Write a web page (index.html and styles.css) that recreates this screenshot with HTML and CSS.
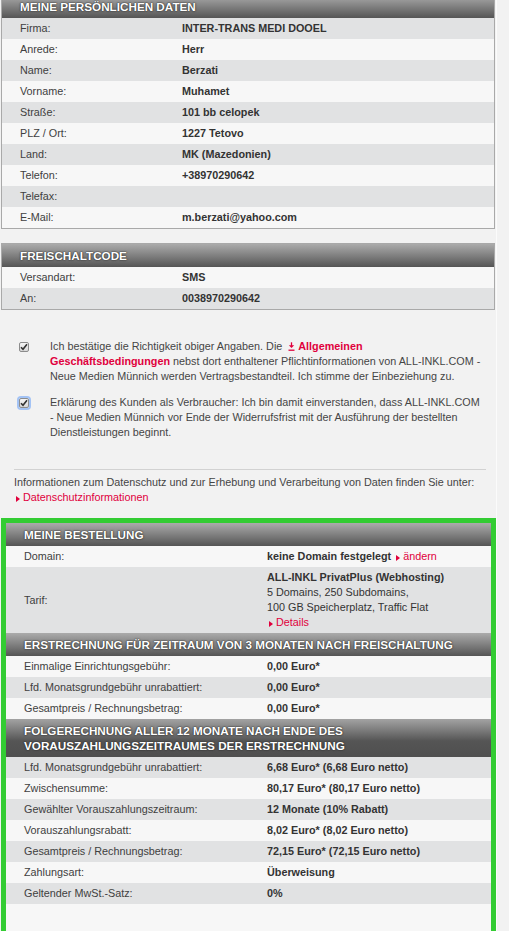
FILE: index.html
```html
<!DOCTYPE html>
<html lang="de">
<head>
<meta charset="utf-8">
<title>Bestellung</title>
<link rel="stylesheet" href="styles.css">
</head>
<body>
<div class="page">
  <section class="box box-first">
    <h2 class="head">Meine persönlichen Daten</h2>
    <div class="row dark"><span class="lbl">Firma:</span><span class="val">INTER-TRANS MEDI DOOEL</span></div>
    <div class="row"><span class="lbl">Anrede:</span><span class="val">Herr</span></div>
    <div class="row dark"><span class="lbl">Name:</span><span class="val">Berzati</span></div>
    <div class="row"><span class="lbl">Vorname:</span><span class="val">Muhamet</span></div>
    <div class="row dark"><span class="lbl">Straße:</span><span class="val">101 bb celopek</span></div>
    <div class="row"><span class="lbl">PLZ / Ort:</span><span class="val">1227 Tetovo</span></div>
    <div class="row dark"><span class="lbl">Land:</span><span class="val">MK (Mazedonien)</span></div>
    <div class="row"><span class="lbl">Telefon:</span><span class="val">+38970290642</span></div>
    <div class="row dark"><span class="lbl">Telefax:</span><span class="val"></span></div>
    <div class="row"><span class="lbl">E-Mail:</span><span class="val">m.berzati@yahoo.com</span></div>
  </section>

  <section class="box box-second">
    <h2 class="head">Freischaltcode</h2>
    <div class="row"><span class="lbl">Versandart:</span><span class="val">SMS</span></div>
    <div class="row dark"><span class="lbl">An:</span><span class="val">0038970290642</span></div>
  </section>

  <div class="consent">
    <div class="check-row">
      <span class="cb"><svg width="8" height="8" viewBox="0 0 8 8"><path d="M1 4.2l2 2.1L7 1.2" fill="none" stroke="#333" stroke-width="1.6"/></svg></span>
      <p class="check-text">Ich bestätige die Richtigkeit obiger Angaben. Die <a class="link" href="#"><svg class="dl" width="7" height="9" viewBox="0 0 7 9"><path d="M3.5 0.3V4.5" stroke="#e0003c" stroke-width="1.3"/><path d="M0.8 3.2h5.4L3.5 6z" fill="#e0003c"/><path d="M0.5 8.2h6" stroke="#e0003c" stroke-width="1.3"/></svg>&nbsp;Allgemeinen Geschäftsbedingungen</a> nebst dort enthaltener Pflichtinformationen von <span class="nw">ALL-INKL.COM</span> - Neue Medien Münnich werden Vertragsbestandteil. Ich stimme der Einbeziehung zu.</p>
    </div>
    <div class="check-row">
      <span class="cb cb-focus"><svg width="8" height="8" viewBox="0 0 8 8"><path d="M1 4.2l2 2.1L7 1.2" fill="none" stroke="#333" stroke-width="1.6"/></svg></span>
      <p class="check-text">Erklärung des Kunden als Verbraucher: Ich bin damit einverstanden, dass <span class="nw">ALL-INKL.COM</span> - Neue Medien Münnich vor Ende der Widerrufsfrist mit der Ausführung der bestellten Dienstleistungen beginnt.</p>
    </div>
  </div>

  <div class="info">
    <p>Informationen zum Datenschutz und zur Erhebung und Verarbeitung von Daten finden Sie unter:</p>
    <p><a class="link arrow" href="#">Datenschutzinformationen</a></p>
  </div>

  <section class="order">
    <h2 class="head">Meine Bestellung</h2>
    <div class="row"><span class="lbl">Domain:</span><span class="val">keine Domain festgelegt <a class="link arrow normal" href="#">ändern</a></span></div>
    <div class="row dark mid"><span class="lbl">Tarif:</span><span class="val">ALL-INKL PrivatPlus (Webhosting)<br><span class="normal">5 Domains, 250 Subdomains,<br>100 GB Speicherplatz, Traffic Flat</span><br><a class="link arrow normal" href="#">Details</a></span></div>
    <h2 class="head">Erstrechnung für Zeitraum von 3 Monaten nach Freischaltung</h2>
    <div class="row"><span class="lbl">Einmalige Einrichtungsgebühr:</span><span class="val">0,00 Euro*</span></div>
    <div class="row dark"><span class="lbl">Lfd. Monatsgrundgebühr unrabattiert:</span><span class="val">0,00 Euro*</span></div>
    <div class="row"><span class="lbl">Gesamtpreis / Rechnungsbetrag:</span><span class="val">0,00 Euro*</span></div>
    <h2 class="head head-tall">Folgerechnung aller 12 Monate nach Ende des Vorauszahlungszeitraumes der Erstrechnung</h2>
    <div class="row dark"><span class="lbl">Lfd. Monatsgrundgebühr unrabattiert:</span><span class="val">6,68 Euro* (6,68 Euro netto)</span></div>
    <div class="row"><span class="lbl">Zwischensumme:</span><span class="val">80,17 Euro* (80,17 Euro netto)</span></div>
    <div class="row dark"><span class="lbl">Gewählter Vorauszahlungszeitraum:</span><span class="val">12 Monate (10% Rabatt)</span></div>
    <div class="row"><span class="lbl">Vorauszahlungsrabatt:</span><span class="val">8,02 Euro* (8,02 Euro netto)</span></div>
    <div class="row dark"><span class="lbl">Gesamtpreis / Rechnungsbetrag:</span><span class="val">72,15 Euro* (72,15 Euro netto)</span></div>
    <div class="row"><span class="lbl">Zahlungsart:</span><span class="val">Überweisung</span></div>
    <div class="row dark"><span class="lbl">Geltender MwSt.-Satz:</span><span class="val">0%</span></div>
    <div class="order-foot"></div>
  </section>
</div>
</body>
</html>
```
FILE: styles.css
```css
* { box-sizing: border-box; }
html, body { margin: 0; padding: 0; }
body {
  background: #f2f2f2;
  font-family: "Liberation Sans", Arial, sans-serif;
  font-size: 10.8px;
  color: #3c3c3c;
  overflow: hidden;
  height: 931px;
}
p { margin: 0; }
h2 { margin: 0; }

.page {
  width: 497px;
  padding-left: 1px;
  border-right: 1px solid #fbfbfb;
  min-height: 931px;
}

.box {
  width: 494px;
  border: 1px solid #a9a9a9;
  background: #f7f7f7;
}
.box-first { margin-top: -6px; }
.box-second { margin-top: 14px; }

.head {
  height: 23px;
  line-height: 23px;
  padding: 0 18px;
  background: linear-gradient(#ababab, #555555);
  color: #fff;
  font-size: 11.7px;
  font-weight: bold;
  text-transform: uppercase;
  text-shadow: 0 0 2px #2a2a2a, 0 0 1px #2a2a2a;
  white-space: nowrap;
}
.head-tall {
  height: 38px;
  line-height: 15px;
  padding-top: 4px;
  padding-bottom: 4px;
  white-space: normal;
  background: linear-gradient(#a3a3a3 0, #555555 22px, #4f4f4f 38px);
}

.row {
  display: grid;
  grid-template-columns: 162px 1fr;
  padding: 3px 18px;
  line-height: 15px;
  background: #f7f7f7;
}
.row.dark { background: #e1e2e3; }
.row.mid { align-items: center; }
.lbl { color: #404040; }
.val { font-weight: bold; color: #333; }
.normal { font-weight: normal; }
.nw { white-space: nowrap; }

.link { color: #e0003c; text-decoration: none; }
.link.arrow::before {
  content: "";
  display: inline-block;
  width: 0;
  height: 0;
  border-left: 4px solid #e0003c;
  border-top: 3.5px solid transparent;
  border-bottom: 3.5px solid transparent;
  margin-right: 3px;
  margin-left: 2px;
  vertical-align: -0.5px;
}
.check-text .link { font-weight: bold; }
.dl { vertical-align: -1px; margin-left: 3px; }

.consent {
  padding: 29px 13px 0 18px;
  display: flex;
  flex-direction: column;
  gap: 11px;
}
.check-row {
  display: flex;
  gap: 21px;
  align-items: flex-start;
}
.cb {
  flex: none;
  width: 10px;
  height: 10px;
  margin-top: 3px;
  border: 1px solid #8c8c8c;
  border-radius: 2px;
  background: linear-gradient(#f6f6f6, #d8d8d8);
  display: flex;
  align-items: center;
  justify-content: center;
}
.cb svg { display: block; }
.cb-focus { box-shadow: 0 0 0 2px #a3c3f5; }
.check-text {
  font-size: 10.8px;
  line-height: 15px;
  color: #454545;
}

.info {
  margin: 29px 10px 0 13px;
  border-top: 1px solid #d2d2d2;
  padding-top: 5px;
  font-size: 10.8px;
  line-height: 15px;
  color: #454545;
}

.order {
  margin-top: 13px;
  width: 495px;
  border: 5px solid #33cc33;
  background: #f7f7f7;
}
.order .row { grid-template-columns: 243px 1fr; }
.order-foot { height: 60px; background: #f7f7f7; }
```
